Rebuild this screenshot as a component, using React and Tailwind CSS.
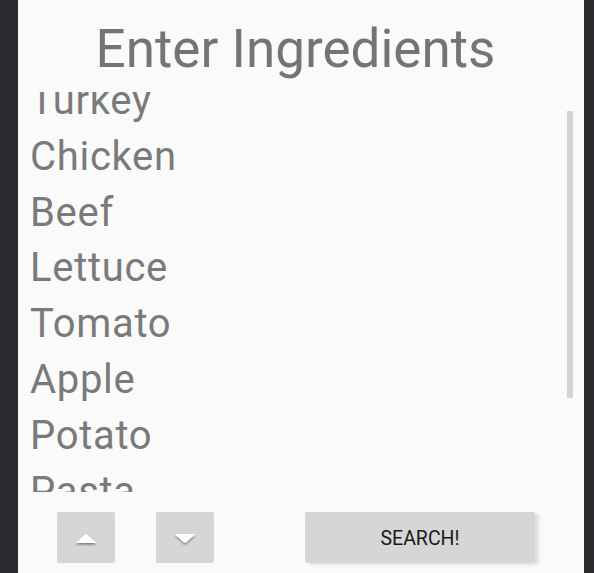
import React from "react";

const items = ["Turkey", "Chicken", "Beef", "Lettuce", "Tomato", "Apple", "Potato", "Pasta", "Rice", "Cheese"];

function Arrow({ up }) {
  return (
    <svg width="28" height="18" viewBox="0 0 28 18" className="mt-[3px]">
      <defs>
        <filter id={up ? "fu" : "fd"} x="-30%" y="-40%" width="160%" height="200%">
          <feDropShadow dx="0" dy="1.5" stdDeviation="1.2" floodColor="#000" floodOpacity="0.45" />
        </filter>
      </defs>
      {up ? (
        <path d="M3.5 13 L13 4.5 Q14 3.7 15 4.5 L24.5 13 Z" fill="#ffffff" filter="url(#fu)" />
      ) : (
        <path d="M3.5 4 L24.5 4 L15 12.5 Q14 13.3 13 12.5 Z" fill="#ffffff" filter="url(#fd)" />
      )}
    </svg>
  );
}

export default function App() {
  return (
    <div
      className="w-[594px] h-[573px] bg-[#2b2c2f] flex overflow-hidden"
      style={{ fontFamily: "Roboto, 'Noto Sans', sans-serif" }}
    >
      <div className="ml-[18px] w-[566px] h-full bg-[#fafafa] flex flex-col">
        <div className="pt-[18px] h-[80px] pr-[11px] text-center text-[53px] leading-[62px] text-[#747474]">
          Enter Ingredients
        </div>
        <div className="relative mt-[12px] h-[400px] overflow-hidden">
          <div className="-mt-[19px] pl-[12px]">
            {items.map((it) => (
              <div key={it} className="text-[40px] leading-[55.8px] tracking-[0.7px] text-[#7a7a7a]">
                {it}
              </div>
            ))}
          </div>
          <div className="absolute left-[549px] top-[19px] w-[6px] h-[287px] bg-[#d4d4d4]" />
        </div>
        <div className="flex pt-[20px] pl-[39px] items-start">
          <button className="w-[58px] h-[51px] rounded-[2px] bg-[#d6d6d6] flex items-center justify-center">
            <Arrow up />
          </button>
          <button className="ml-[41px] w-[58px] h-[51px] rounded-[2px] bg-[#d6d6d6] flex items-center justify-center">
            <Arrow />
          </button>
          <button className="ml-[91px] w-[230px] h-[51px] rounded-[2px] bg-[#d6d6d6] shadow-[4px_2px_3px_rgba(0,0,0,0.1)] flex items-center justify-center pt-[3px] text-[19.5px] font-normal text-[#1a1a1a]">
            SEARCH!
          </button>
        </div>
      </div>
    </div>
  );
}
